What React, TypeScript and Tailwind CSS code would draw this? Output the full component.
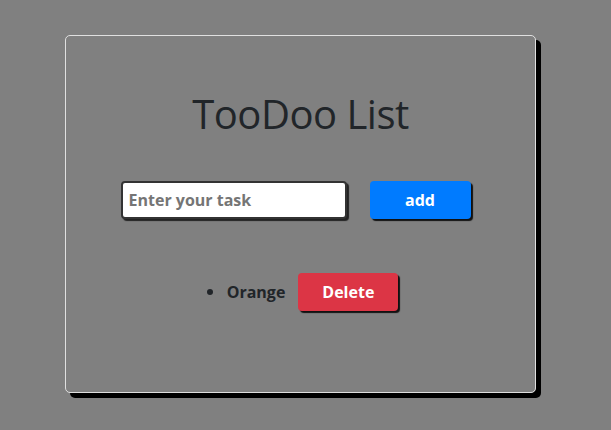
import React from "react";

export default function App() {
  return (
    <div className="min-h-[430px] w-full bg-[#808080] pt-[35px] pl-[65px]" style={{ fontFamily: '"Open Sans", "Noto Sans", sans-serif' }}>
      <div className="w-[471px] h-[358px] rounded-[5px] border border-[#e0e0e0] shadow-[5px_5px_0_0_#000] flex flex-col items-center">
        <h1 className="mt-[54px] text-[40px] leading-[48px] font-normal text-[#212529] tracking-[-0.5px]">TooDoo List</h1>
        <div className="mt-[43px] flex items-center gap-[23px] pr-[10px]">
          <input
            type="text"
            placeholder="Enter your task"
            className="w-[226px] h-[38px] rounded-[4px] border-2 border-[#333] bg-white px-[6px] text-[16px] font-bold text-[#212529] placeholder:text-[#757575] shadow-[2px_2px_1px_0_#222] outline-none"
          />
          <button className="w-[101px] h-[38px] rounded-[4px] bg-[#007bff] text-white font-bold text-[16px] shadow-[2px_2px_1px_0_#111]">add</button>
        </div>
        <ul className="mt-[54px] flex items-center pl-[4px]">
          <li className="flex items-center">
            <span className="w-[6px] h-[6px] rounded-full bg-[#212529] mr-[14px]"></span>
            <span className="text-[16px] font-bold text-[#212529]">Orange</span>
            <button className="ml-[13px] w-[100px] h-[38px] rounded-[4px] bg-[#dc3545] text-white font-bold text-[16px] shadow-[2px_2px_1px_0_#111]">Delete</button>
          </li>
        </ul>
      </div>
    </div>
  );
}
